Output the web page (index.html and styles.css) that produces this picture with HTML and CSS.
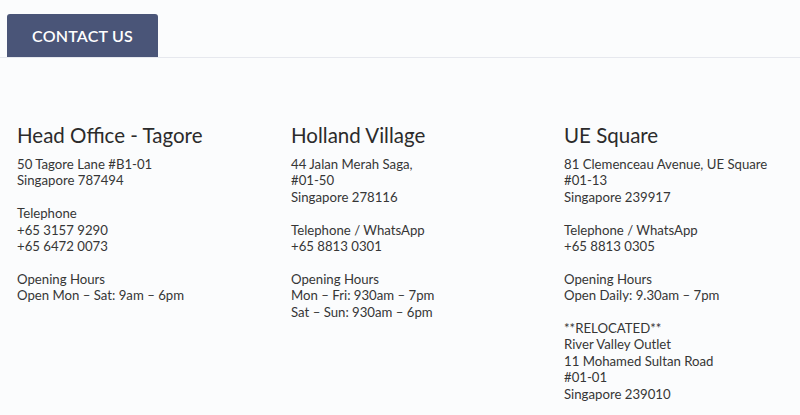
FILE: index.html
```html
<!DOCTYPE html>
<html>
<head>
    <title>Contact Us</title>
    <link rel="stylesheet" href="styles.css">
</head>
<body>

<div class="tab-bar">
    <div class="tab">CONTACT US</div>
</div>

<div class="locations">
    <div class="location">
        <h3>Head Office - Tagore</h3>
        <p>50 Tagore Lane #B1-01<br>Singapore 787494</p>
        <p>Telephone<br>+65 3157 9290<br>+65 6472 0073</p>
        <p>Opening Hours<br>Open Mon – Sat: 9am – 6pm</p>
    </div>
    <div class="location">
        <h3>Holland Village</h3>
        <p>44 Jalan Merah Saga,<br>#01-50<br>Singapore 278116</p>
        <p>Telephone / WhatsApp<br>+65 8813 0301</p>
        <p>Opening Hours<br>Mon – Fri: 930am – 7pm<br>Sat – Sun: 930am – 6pm</p>
    </div>
    <div class="location">
        <h3>UE Square</h3>
        <p>81 Clemenceau Avenue, UE Square<br>#01-13<br>Singapore 239917</p>
        <p>Telephone / WhatsApp<br>+65 8813 0305</p>
        <p>Opening Hours<br>Open Daily: 9.30am – 7pm</p>
        <p>**RELOCATED**<br>River Valley Outlet<br>11 Mohamed Sultan Road<br>#01-01<br>Singapore 239010</p>
    </div>
</div>

</body>
</html>
```

FILE: styles.css
```css
body {
    margin: 0;
    background: #fbfcfd;
    font-family: Lato, "Open Sans", sans-serif;
    color: #363636;
}
.tab-bar {
    padding: 14px 0 0 7px;
    border-bottom: 1px solid #e6e8ee;
    display: flex;
}
.tab {
    width: 151px;
    height: 43px;
    background: #4a5578;
    color: #fff;
    font-size: 16px;
    font-weight: 600;
    letter-spacing: 0.2px;
    display: flex;
    align-items: center;
    justify-content: center;
    border-radius: 3px 3px 0 0;
}
.locations {
    display: grid;
    grid-template-columns: 274px 273px 1fr;
    padding: 65px 0 0 17px;
}
.location h3 {
    margin: 0 0 8px;
    font-size: 20.5px;
    line-height: 25px;
    font-weight: 400;
    color: #2b2b2b;
}
.location p {
    margin: 0 0 16.4px;
    font-size: 13.2px;
    line-height: 16.4px;
}
```
